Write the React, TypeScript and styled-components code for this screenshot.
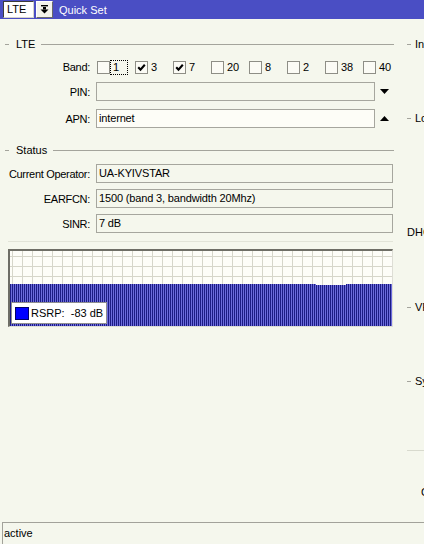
import React from "react";
import styled, { createGlobalStyle } from "styled-components";

const GlobalStyle = createGlobalStyle`
  html, body { margin: 0; padding: 0; }
  body {
    background: #f5f7ed;
    font-family: "Liberation Sans", Arial, sans-serif;
    font-size: 11px;
    color: #000;
    width: 424px;
    height: 544px;
    overflow: hidden;
  }
`;

const Window = styled.div`
  width: 424px;
  height: 544px;
  display: flex;
  flex-direction: column;
  background: #f5f7ed;
`;

/* ---------- title bar ---------- */
const TitleBar = styled.div`
  height: 19px;
  flex: none;
  box-sizing: border-box;
  background: #4a4ec4;
  display: flex;
  align-items: center;
  padding-left: 3px;
`;

const ModeBox = styled.div`
  width: 31px;
  height: 17px;
  box-sizing: border-box;
  background: #fff;
  border: 1px solid #3c3c3c;
  border-right-color: #d4d4cc;
  border-bottom-color: #d4d4cc;
  padding-left: 3px;
  line-height: 15px;
`;

const DropButton = styled.div`
  margin-left: 2px;
  width: 17px;
  height: 17px;
  box-sizing: border-box;
  background: #f3f3eb;
  border: 1px solid #ffffff;
  border-right-color: #6a6a6a;
  border-bottom-color: #6a6a6a;
  display: flex;
  align-items: center;
  justify-content: center;
`;

const Title = styled.span`
  margin-left: 6px;
  color: #fff;
`;

/* ---------- body ---------- */
const Body = styled.div`
  flex: 1;
  min-height: 0;
  display: flex;
`;

const Main = styled.div`
  width: 394px;
  flex: none;
  display: flex;
  flex-direction: column;
`;

const Side = styled.div`
  flex: 1;
  min-width: 0;
  overflow: hidden;
  white-space: nowrap;
  display: flex;
  flex-direction: column;
  padding-left: 13px;
`;

const GroupHeader = styled.div<{ $top: number }>`
  margin-top: ${(p) => p.$top}px;
  height: 14px;
  flex: none;
  display: flex;
  align-items: center;
  white-space: nowrap;
  &::before {
    content: "";
    width: 4px;
    height: 1px;
    background: #a4a49c;
    margin-left: 5px;
    margin-right: 7px;
  }
  &::after {
    content: "";
    flex: 1;
    height: 1px;
    background: #a4a49c;
    margin-left: 6px;
  }
`;

const FormRow = styled.div<{ $top: number; $height: number }>`
  margin-top: ${(p) => p.$top}px;
  height: ${(p) => p.$height}px;
  flex: none;
  display: flex;
  align-items: center;
`;

const FieldLabel = styled.span`
  width: 90px;
  flex: none;
  margin-right: 6px;
  text-align: right;
  letter-spacing: -0.3px;
  white-space: nowrap;
`;

const Field = styled.div<{ $width: number; $editable?: boolean }>`
  width: ${(p) => p.$width}px;
  height: 19px;
  flex: none;
  box-sizing: border-box;
  border: 1px solid #a6a69e;
  background: ${(p) => (p.$editable ? "#fdfdf7" : "#f5f7ed")};
  padding: 0 2px;
  line-height: 17px;
  letter-spacing: -0.15px;
  white-space: nowrap;
  overflow: hidden;
`;

const ArrowCell = styled.div`
  width: 19px;
  flex: none;
  display: flex;
  justify-content: center;
  align-items: center;
`;

const BandList = styled.div`
  display: flex;
  margin-left: 1px;
`;

const BandItem = styled.div`
  width: 38px;
  flex: none;
  display: flex;
  align-items: center;
`;

const CheckBox = styled.span`
  width: 13px;
  height: 13px;
  flex: none;
  box-sizing: border-box;
  border: 1px solid #8e8e86;
  background: #fbfbf5;
  display: flex;
  align-items: center;
  justify-content: center;
`;

const BandCaption = styled.span<{ $focused?: boolean }>`
  box-sizing: border-box;
  height: 15px;
  line-height: 13px;
  padding: 0 2px;
  border: 1px ${(p) => (p.$focused ? "dotted #000" : "solid transparent")};
  min-width: ${(p) => (p.$focused ? "18px" : "0")};
`;

const Divider = styled.div`
  margin-top: 8px;
  margin-left: 8px;
  width: 385px;
  height: 1px;
  flex: none;
  background: #e2e4d8;
`;

const ChartFrame = styled.div`
  position: relative;
  margin-top: 7px;
  margin-left: 8px;
  width: 385px;
  height: 78px;
  flex: none;
  box-sizing: border-box;
  border-top: 2px solid #6e6e66;
  border-left: 2px solid #6e6e66;
  border-right: 1px solid #deded6;
  border-bottom: 1px solid #deded6;
  background: #fdfdf8;
  svg {
    display: block;
  }
`;

const Legend = styled.div`
  position: absolute;
  left: 1px;
  top: 51px;
  width: 96px;
  height: 22px;
  box-sizing: border-box;
  background: #fff;
  border: 1px solid #8e8e8e;
  display: flex;
  align-items: center;
  padding-left: 3px;
  white-space: pre;
`;

const Swatch = styled.span`
  width: 14px;
  height: 13px;
  box-sizing: border-box;
  background: #0000ff;
  border: 1px solid #00006a;
  margin-right: 2px;
  flex: none;
`;

const SideHeading = styled.div<{ $top: number }>`
  margin-top: ${(p) => p.$top}px;
  height: 14px;
  line-height: 14px;
  flex: none;
  display: flex;
  align-items: center;
  &::before {
    content: "";
    width: 4px;
    height: 1px;
    background: #a4a49c;
    margin-right: 4px;
    flex: none;
  }
`;

const SideText = styled.div<{ $top: number; $indent?: number }>`
  margin-top: ${(p) => p.$top}px;
  margin-left: ${(p) => p.$indent ?? 0}px;
  height: 14px;
  line-height: 14px;
  flex: none;
`;

const SideRule = styled.div<{ $top: number }>`
  margin-top: ${(p) => p.$top}px;
  height: 1px;
  flex: none;
  background: #d8dace;
`;

const StatusBar = styled.div`
  height: 22px;
  flex: none;
  box-sizing: border-box;
  margin-left: 2px;
  border-top: 1px solid #a2a29a;
  border-left: 1px solid #a2a29a;
  padding-left: 1px;
  line-height: 20px;
`;

/* ---------- drawings ---------- */
const DropIcon = () => (
  <svg width="9" height="9" viewBox="0 0 9 9">
    <rect x="1" y="0" width="7" height="1.4" fill="#000" />
    <rect x="3" y="2" width="3" height="2.5" fill="#000" />
    <polygon points="0.5,4.5 8.5,4.5 4.5,8.5" fill="#000" />
  </svg>
);

const Tick = () => (
  <svg width="9" height="9" viewBox="0 0 9 9">
    <path d="M1.2 4.2 L3.5 6.6 L7.8 1.8" stroke="#000" strokeWidth="2.1" fill="none" />
  </svg>
);

const Triangle = ({ up }: { up?: boolean }) => (
  <svg width="9" height="5" viewBox="0 0 9 5">
    <polygon points={up ? "0,5 9,5 4.5,0" : "0,0 9,0 4.5,5"} fill="#000" />
  </svg>
);

const W = 382;
const H = 75;
const FILL_TOP = 33;

// one sample every 2px, 1px wide bars over a mid-blue fill
const samples = Array.from({ length: Math.ceil(W / 2) }, (_, i) => {
  const x = i * 2;
  const dip = x >= 305 && x <= 334 ? 1 : 0;
  return { x, top: FILL_TOP + dip };
});

const SignalChart = () => (
  <svg width={W} height={H} viewBox={`0 0 ${W} ${H}`}>
    {Array.from({ length: 39 }, (_, i) => (
      <line key={`v${i}`} x1={2.5 + i * 10} y1={0} x2={2.5 + i * 10} y2={H} stroke="#d6d6ca" strokeWidth="1" />
    ))}
    {[5, 15, 25].map((y) => (
      <line key={`h${y}`} x1={0} y1={y + 0.5} x2={W} y2={y + 0.5} stroke="#d6d6ca" strokeWidth="1" />
    ))}
    {samples.map((s) => (
      <rect key={`f${s.x}`} x={s.x + 1} y={s.top} width={1} height={H - s.top} fill="#6c6cdc" />
    ))}
    {samples.map((s) => (
      <rect key={`b${s.x}`} x={s.x} y={s.top} width={1} height={H - s.top} fill="#1c1c84" />
    ))}
  </svg>
);

const bands = [
  { n: "1", on: false, focused: true },
  { n: "3", on: true },
  { n: "7", on: true },
  { n: "20", on: false },
  { n: "8", on: false },
  { n: "2", on: false },
  { n: "38", on: false },
  { n: "40", on: false },
];

export default function App() {
  return (
    <Window>
      <GlobalStyle />
      <TitleBar>
        <ModeBox>LTE</ModeBox>
        <DropButton>
          <DropIcon />
        </DropButton>
        <Title>Quick Set</Title>
      </TitleBar>

      <Body>
        <Main>
          <GroupHeader $top={18}>LTE</GroupHeader>
          <FormRow $top={9} $height={14}>
            <FieldLabel>Band:</FieldLabel>
            <BandList>
              {bands.map((b) => (
                <BandItem key={b.n}>
                  <CheckBox>{b.on && <Tick />}</CheckBox>
                  <BandCaption $focused={b.focused}>{b.n}</BandCaption>
                </BandItem>
              ))}
            </BandList>
          </FormRow>
          <FormRow $top={8} $height={19}>
            <FieldLabel>PIN:</FieldLabel>
            <Field $width={279} />
            <ArrowCell>
              <Triangle />
            </ArrowCell>
          </FormRow>
          <FormRow $top={8} $height={19}>
            <FieldLabel>APN:</FieldLabel>
            <Field $width={279} $editable>
              internet
            </Field>
            <ArrowCell>
              <Triangle up />
            </ArrowCell>
          </FormRow>

          <GroupHeader $top={15}>Status</GroupHeader>
          <FormRow $top={7} $height={19}>
            <FieldLabel>Current Operator:</FieldLabel>
            <Field $width={297}>UA-KYIVSTAR</Field>
          </FormRow>
          <FormRow $top={6} $height={19}>
            <FieldLabel>EARFCN:</FieldLabel>
            <Field $width={297}>1500 (band 3, bandwidth 20Mhz)</Field>
          </FormRow>
          <FormRow $top={6} $height={19}>
            <FieldLabel>SINR:</FieldLabel>
            <Field $width={297}>7 dB</Field>
          </FormRow>

          <Divider />
          <ChartFrame>
            <SignalChart />
            <Legend>
              <Swatch />
              {"RSRP:  -83 dB"}
            </Legend>
          </ChartFrame>
        </Main>

        <Side>
          <SideHeading $top={18}>Internet</SideHeading>
          <SideHeading $top={60}>Local Network</SideHeading>
          <SideText $top={100}>DHCP Server</SideText>
          <SideHeading $top={61}>VPN</SideHeading>
          <SideHeading $top={60}>System</SideHeading>
          <SideRule $top={62} />
          <SideText $top={34} $indent={14}>Check For Updates</SideText>
        </Side>
      </Body>

      <StatusBar>active</StatusBar>
    </Window>
  );
}
